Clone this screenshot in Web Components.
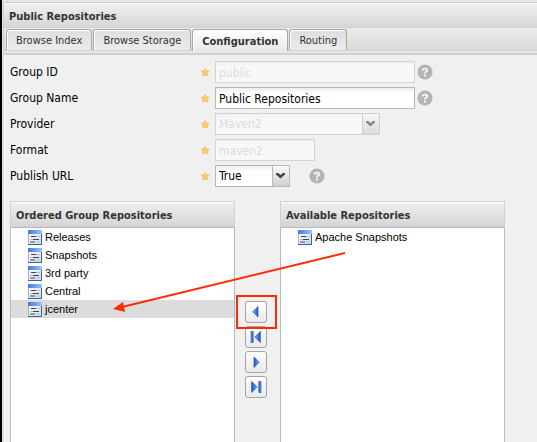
<!DOCTYPE html>
<html lang="en">
<head>
<meta charset="utf-8">
<title>Public Repositories</title>
<style>
html, body { height: 100%; }
body { margin: 0; background: #f0f0f0; color: #000; font: 12px/16px "DejaVu Sans Condensed", "DejaVu Sans", sans-serif; overflow: hidden; }
</style>
</head>
<body>
<repo-panel heading="Public Repositories">
  <tab-bar slot="tabs">
    <tab-item>Browse Index</tab-item>
    <tab-item>Browse Storage</tab-item>
    <tab-item selected>Configuration</tab-item>
    <tab-item>Routing</tab-item>
  </tab-bar>
  <form-field label="Group ID" value="public" size="wide" disabled help></form-field>
  <form-field label="Group Name" value="Public Repositories" size="wide" help></form-field>
  <form-field label="Provider" value="Maven2" type="select" size="medium" disabled></form-field>
  <form-field label="Format" value="maven2" size="small" disabled></form-field>
  <form-field label="Publish URL" value="True" type="select" size="tiny" help></form-field>
  <repo-transfer slot="lists">
    <repo-list slot="from" heading="Ordered Group Repositories">
      <repo-item>Releases</repo-item>
      <repo-item>Snapshots</repo-item>
      <repo-item>3rd party</repo-item>
      <repo-item>Central</repo-item>
      <repo-item selected>jcenter</repo-item>
    </repo-list>
    <repo-list slot="to" heading="Available Repositories">
      <repo-item>Apache Snapshots</repo-item>
    </repo-list>
  </repo-transfer>
</repo-panel>
<script>
class Base extends HTMLElement {
  connectedCallback() {
    if (this.shadowRoot) return;
    this.attachShadow({ mode: "open" }).innerHTML = "<style>*{box-sizing:border-box}</style>" + this.render();
  }
  attr(name) { return this.getAttribute(name) || ""; }
}

customElements.define("repo-panel", class extends Base {
  render() { return `
    <style>
      :host { display: flex; flex-direction: column; box-sizing: border-box; height: 100vh; padding-top: 2px; border-left: 2px solid #000; background: #e6e6e6; }
      .frame { flex: 1; min-height: 0; display: flex; flex-direction: column; margin-left: 1px; border-top: 1px solid #d0d0d0; border-left: 1px solid #d0d0d0; }
      h1 { margin: 0; height: 25px; padding: 5px 5px 0; border-top: 1px solid #fff; border-bottom: 1px solid #d0d0d0;
           background: linear-gradient(#f0f0f0, #d6d6d6); color: #333; font: bold 11px/16px "DejaVu Sans Condensed", "DejaVu Sans", sans-serif; }
      main { flex: 1; min-height: 0; display: flex; flex-direction: column; gap: 14px; padding: 6px 0 0 5px; background: #f0f0f0; border-left: 1px solid #fff; }
      form { display: flex; flex-direction: column; gap: 4px; }
      slot[name=lists] { display: contents; }
    </style>
    <div class="frame">
      <h1>${this.attr("heading")}</h1>
      <slot name="tabs"></slot>
      <main><form><slot></slot></form><slot name="lists"></slot></main>
    </div>`; }
});

customElements.define("tab-bar", class extends Base {
  render() { return `
    <style>
      :host { display: block; border-bottom: 2px solid #d0d0d0; background: #e8e8e8; }
      nav { display: flex; gap: 1px; height: 23px; padding: 1px 2px 0; background: linear-gradient(#ececec, #dadada); border-bottom: 1px solid #d0d0d0; margin-bottom: 2px; }
    </style>
    <nav role="tablist"><slot></slot></nav>`; }
});

customElements.define("tab-item", class extends Base {
  render() { return `
    <style>
      :host { display: block; height: 21px; }
      button { height: 21px; padding: 1px 9px 0; border: 1px solid #a8a8a8; border-bottom: 0; border-radius: 3px 3px 0 0; color: #333; white-space: nowrap;
               box-shadow: inset 1px 1px #fff; background: linear-gradient(#dedede, #ececec); font: 11px/19px "DejaVu Sans Condensed", "DejaVu Sans", sans-serif; }
      :host([selected]) button { height: 22px; font-weight: bold; background: linear-gradient(#fff, #e8e8e8); }
    </style>
    <button role="tab" aria-selected="${this.hasAttribute("selected")}"><slot></slot></button>`; }
});

customElements.define("form-field", class extends Base {
  render() {
    const off = this.hasAttribute("disabled") ? "disabled" : "";
    const value = this.attr("value");
    const control = this.attr("type") === "select"
      ? `<select id="control" ${off}><option>${value}</option></select>
         <svg class="trigger" width="18" height="22" viewBox="0 0 18 22"><defs><linearGradient id="g" x2="0" y2="1"><stop stop-color="#fbfbfb"/><stop offset="1" stop-color="#cfcfcf"/></linearGradient></defs>
           <path d="M0 0H18V22H0Z" fill="#b5b8c8"/><path d="M1 1H17V21H1Z" fill="url(#g)"/><path d="M4 8H6L8.5 10L11 8H13V9.5L8.5 13.5L4 9.5Z" fill="#444"/></svg>`
      : `<input id="control" type="text" value="${value}" ${off}>`;
    return `
    <style>
      :host { display: grid; grid-template-columns: 191px 14px auto 1fr; align-items: center; height: 22px; }
      .control { display: flex; height: 22px; }
      input, select { flex: 1; min-width: 0; height: 22px; margin: 0; padding: 1px 3px 0; border: 1px solid #b5b8b8; border-radius: 0; appearance: none; color: #000; opacity: 1;
        background: linear-gradient(#e9eeee, #fff 5px); font: 12px/19px "DejaVu Sans Condensed", "DejaVu Sans", sans-serif; }
      select { border-right: 0; }
      :host([disabled]) input, :host([disabled]) select { border-color: #d2d3d3; color: #dadada; background: linear-gradient(#eff2f2, #f8f8f8 5px); }
      :host([disabled]) .trigger { opacity: .6; }
      .wide { width: 200px; } .medium { width: 165px; } .small { width: 100px; } .tiny { width: 75px; }
      .help { margin-left: 2px; }
      .tiny + .help { margin-left: 19px; }
    </style>
    <label for="control">${this.attr("label")}</label>
    <svg width="9" height="9" viewBox="0 0 9 9"><path d="M4.3.5L5.6 2.8L8.3 3.3L6.5 5.3L6.9 8L4.3 6.9L1.7 8L2.1 5.3L.4 3.3L3.1 2.8Z" fill="#f9cf65" stroke="#efbd61" stroke-width=".8"/></svg>
    <span class="control ${this.attr("size")}">${control}</span>
    ${this.hasAttribute("help") ? `<svg class="help" width="16" height="16" viewBox="0 0 16 16"><circle cx="8" cy="8" r="7.6" fill="#b4b4b4"/><path d="M5.7 6.4Q5.7 4.6 8 4.6Q10.2 4.6 10.2 6.2Q10.2 7.1 9.1 7.7Q8 8.3 8 9.4M8 10.6V12.4" fill="none" stroke="#f6f6f6" stroke-width="1.9"/></svg>` : ""}`;
  }
});

customElements.define("repo-transfer", class extends Base {
  render() {
    const tri = '<path d="M10 4.5V15L4.8 9.8Z" fill="url(#b)" stroke="#2556b5" stroke-width=".7"/>';
    const bar = '<path d="M3 4.5H5.2V15.5H3Z" fill="url(#b)" stroke="#2556b5" stroke-width=".7"/><path d="M12.4 4.5V15.5L6.8 10Z" fill="url(#b)" stroke="#2556b5" stroke-width=".7"/>';
    const make = (label, cls, shape) => `<button type="button" aria-label="${label}" class="${cls}"><svg width="16" height="20" viewBox="0 0 16 20"><defs><linearGradient id="b"><stop stop-color="#7db0f3"/><stop offset="1" stop-color="#1e55c8"/></linearGradient></defs>${shape}</svg></button>`;
    return `
    <style>
      :host { position: relative; flex: 1; min-height: 0; display: grid; grid-template-columns: 225px 45px 225px; grid-template-rows: 100%; }
      .moves { display: flex; flex-direction: column; align-items: flex-start; gap: 3px; padding: 100px 0 0 10px; }
      button { width: 22px; height: 22px; padding: 0; display: flex; align-items: center; justify-content: center; border: 1px solid #a4a4a4; border-radius: 3px; background: linear-gradient(#fff, #e9e9e9); }
      .right svg { transform: rotate(180deg); }
      .note { position: absolute; left: 0; top: 0; pointer-events: none; }
    </style>
    <slot name="from"></slot>
    <div class="moves">${make("Add", "", tri)}${make("Add all", "", bar)}${make("Remove", "right", tri)}${make("Remove all", "right", bar)}</div>
    <slot name="to"></slot>
    <svg class="note" width="350" height="130" viewBox="0 0 350 130">
      <path d="M335 52L112 106" stroke="#fe2c05" stroke-width="2"/>
      <path d="M103 108L113 101L115 111Z" fill="#fe2c05"/>
      <path d="M227 95H266V127H227Z" fill="none" stroke="#fe2c05" stroke-width="2"/>
    </svg>`;
  }
});

customElements.define("repo-list", class extends Base {
  render() { return `
    <style>
      :host { display: flex; flex-direction: column; box-sizing: border-box; height: 100%; background: #fff; border: 1px solid #b5b8c8; border-width: 0 1px; }
      h2 { margin: 0 -1px; height: 27px; padding: 6px 5px 0; border: 1px solid #d0d0d0; border-bottom-color: #b5b5c8; box-shadow: inset 0 1px #fff;
           background: linear-gradient(#f0f0f0, #d4d4d4); color: #333; font: bold 11px/16px "DejaVu Sans Condensed", "DejaVu Sans", sans-serif; white-space: nowrap; }
    </style>
    <h2>${this.attr("heading")}</h2>
    <div role="list"><slot></slot></div>`; }
});

customElements.define("repo-item", class extends Base {
  render() { return `
    <style>
      :host { display: flex; align-items: center; gap: 3px; height: 18px; padding-left: 17px; font: 11px/18px "Liberation Sans", Arial, sans-serif; }
      :host([selected]) { background: #dcdcdc; }
    </style>
    <svg width="14" height="15" viewBox="0 0 14 15"><defs><linearGradient id="h"><stop stop-color="#3f78e6"/><stop offset="1" stop-color="#9cc3fb"/></linearGradient><linearGradient id="p" x2="1" y2="1"><stop stop-color="#fff"/><stop offset="1" stop-color="#c9dcf5"/></linearGradient></defs>
      <path d="M0 0H14V15H0Z" fill="#a3b4cc"/><path d="M1 1H13V14H1Z" fill="url(#p)"/><path d="M0 0H14V4H0Z" fill="url(#h)"/><path d="M13.5 4V14.5H0" fill="none" stroke="#3f5f8c"/>
      <path d="M3 6.5H8M5 9.5H11M2 12H7" stroke="#444" stroke-width="1.2"/><path d="M8 6.5H12M2 9.5H5M8 12H12" stroke="#b8c0cc"/></svg>
    <span><slot></slot></span>`; }
  connectedCallback() { super.connectedCallback(); this.setAttribute("role", "listitem"); }
});
</script>
</body>
</html>
